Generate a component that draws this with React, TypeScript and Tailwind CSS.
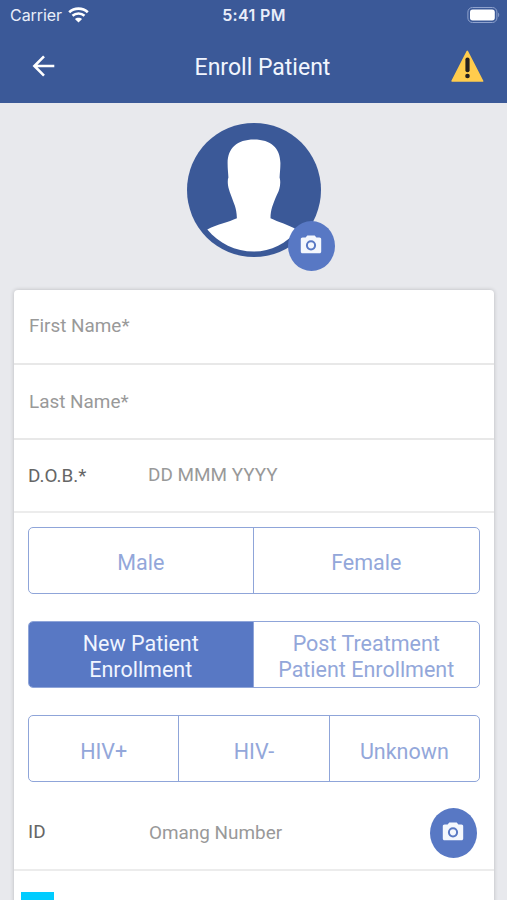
import { useState } from 'react';
import clsx from 'clsx';

function StatusBar() {
    return (
        <div className="grid grid-cols-3 items-center h-[30px] pl-[10px] pr-[7px] text-[#e9eefa] font-['Inter',sans-serif]">
            <div className="flex items-center gap-[6px]">
                <span className="text-[16px] leading-[20px] tracking-[-0.05px]">Carrier</span>
                <svg width="21" height="16" viewBox="0 0 21 16" fill="none" stroke="#fff">
                    <path d="M1.2 5.2C6.4 0.4 14.6 0.4 19.8 5.2" strokeWidth="2.7" />
                    <path d="M4.5 8.8C7.9 5.7 13.1 5.7 16.5 8.8" strokeWidth="2.6" />
                    <path d="M10.5 15.6L6.9 12C8.9 10.2 12.1 10.2 14.1 12Z" fill="#fff" stroke="none" />
                </svg>
            </div>
            <span className="text-center text-[16px] leading-[20px] tracking-[0.35px] font-semibold whitespace-nowrap pr-[2px]">5:41 PM</span>
            <svg className="justify-self-end" width="33" height="16" viewBox="0 0 33 16">
                <rect x="0.9" y="0.5" width="29" height="15" rx="4.5" fill="none" stroke="#8fa2cd" />
                <rect x="3" y="2.6" width="24.8" height="10.8" rx="2.6" fill="#fff" />
                <path d="M31.2 5.6C32.6 6.4 32.6 9.4 31.2 10.2Z" fill="#8fa2cd" />
            </svg>
        </div>
    );
}

function Header() {
    return (
        <header className="h-[103px] bg-[#3b5998]">
            <StatusBar />
            <div className="flex items-center justify-between h-[73px] pl-[32px] pr-[23px]">
                <button className="w-[42px] -mt-[2px]">
                    <svg width="23" height="22" viewBox="0 0 23 22" fill="none" stroke="#fff" strokeWidth="2.6">
                        <path d="M22.3 11H2.8M12 1.4L2.4 11L12 20.6" />
                    </svg>
                </button>
                <h1 className="text-[23px] leading-[28px] pt-[3px] text-[#f1f5fe]">Enroll Patient</h1>
                <svg width="33" height="33" viewBox="0 0 33 33">
                    <path d="M16.3 1.4L31.6 31H1.1Z" fill="#ffcc4d" stroke="#ffcc4d" strokeWidth="1.6" strokeLinejoin="round" />
                    <path d="M16.5 9.6V20.2" stroke="#231f20" strokeWidth="4.2" strokeLinecap="round" />
                    <circle cx="16.5" cy="26" r="2.3" fill="#231f20" />
                </svg>
            </div>
        </header>
    );
}

function CameraButton({ className }: { className?: string }) {
    return (
        <button className={clsx('flex items-center justify-center w-[47px] h-[50px] rounded-[50%] bg-[#5878c4]', className)}>
            <svg width="22" height="19" viewBox="0 0 22 19" className="-mt-[2px] -ml-[1px]">
                <path
                    d="M7.3 0.6H14.7L16.4 2.5H19.4C20.6 2.5 21.2 3.2 21.2 4.3V16.4C21.2 17.5 20.6 18.2 19.4 18.2H2.6C1.4 18.2 0.8 17.5 0.8 16.4V4.3C0.8 3.2 1.4 2.5 2.6 2.5H5.6Z"
                    fill="#f4f7fd"
                />
                <circle cx="11" cy="10.3" r="4.1" fill="none" stroke="#5878c4" strokeWidth="2" />
            </svg>
        </button>
    );
}

function Avatar() {
    return (
        <div className="relative w-[134px] h-[134px] mx-auto">
            <svg width="134" height="134" viewBox="0 0 134 134">
                <circle cx="67" cy="67" r="67" fill="#3b5998" />
                <path
                    d="M67 16.5C50 16.5 40.8 25 40.6 40C40.6 46 41.2 50 41.4 54.5C40.4 57 40.6 62 42 66.5C43 70 44 72 45 75C46.5 80 49.6 84 49.9 95.2C42 99 29 101.5 20.3 106.5C32 120.5 48 128.5 67 128.5C84 128.5 100 120.5 110 107C102 101.5 91 99 83.5 95.2C83.5 86 86.5 80.5 88.5 75C90 71.5 91.5 69 92.3 66C93.4 62 93.6 57.5 92.6 54.5C92.8 50 93.4 46 93.4 40C93.2 25 84 16.5 67 16.5Z"
                    fill="#fff"
                />
            </svg>
            <CameraButton className="absolute left-[101px] top-[98px]" />
        </div>
    );
}

type SegmentsProps = {
    options: string[];
    selected?: string;
    onSelect: (option: string) => void;
};

function Segments({ options, selected, onSelect }: SegmentsProps) {
    return (
        <div className="flex h-[67px] rounded-[5px] border-[1.5px] border-[#8fa5d9] divide-x divide-[#8fa5d9] overflow-hidden">
            {options.map((option) => (
                <button
                    key={option}
                    onClick={() => onSelect(option)}
                    className={clsx(
                        'grow basis-0 whitespace-pre-line text-center text-[21.5px] leading-[26px]',
                        options.length > 2 ? 'pt-[6px]' : 'pt-[4px] last:basis-[2px]',
                        option === selected ? 'bg-[#5878c4] text-[#f0f5ff]' : 'text-[#93a7da]'
                    )}
                >
                    {option}
                </button>
            ))}
        </div>
    );
}

export default function App() {
    const [gender, setGender] = useState('');
    const [enrollment, setEnrollment] = useState('New Patient\nEnrollment');
    const [status, setStatus] = useState('');

    return (
        <div className="h-[900px] overflow-hidden bg-[#e8e9ed] font-['Roboto',sans-serif]">
            <Header />
            <main className="pl-[14px] pr-[13px] pt-[19.5px]">
                <Avatar />
                <div className="mt-[33px] h-[640px] rounded-[4px] bg-white shadow-[0_0_4px_rgba(0,0,0,0.2)] text-[18.9px] leading-[24px] text-[#999]">
                    <div className="flex items-center h-[75.5px] px-[15px] border-b-2 border-[#e8e8e8]">First Name*</div>
                    <div className="flex items-center h-[75px] px-[15px] border-b-2 border-[#e8e8e8]">Last Name*</div>
                    <div className="flex items-center h-[73px] px-[14px] border-b-2 border-[#ececec]">
                        <span className="w-[120px] text-[#666]">D.O.B.*</span>
                        <span className="-mt-[2px]">DD MMM YYYY</span>
                    </div>
                    <div className="flex flex-col gap-[27px] px-[14px] pt-[14px]">
                        <Segments options={['Male', 'Female']} selected={gender} onSelect={setGender} />
                        <Segments
                            options={['New Patient\nEnrollment', 'Post Treatment\nPatient Enrollment']}
                            selected={enrollment}
                            onSelect={setEnrollment}
                        />
                        <Segments options={['HIV+', 'HIV-', 'Unknown']} selected={status} onSelect={setStatus} />
                    </div>
                    <div className="flex items-center h-[89px] pl-[14px] pr-[17px] pt-[14px] border-b-2 border-[#ececec]">
                        <span className="w-[121px] -mt-[2px] text-[#666]">ID</span>
                        <span className="flex-1">Omang Number</span>
                        <CameraButton />
                    </div>
                    <div className="ml-[7px] mt-[20.5px] w-[33px] h-[33px] bg-[#00ccff]" />
                </div>
            </main>
        </div>
    );
}
